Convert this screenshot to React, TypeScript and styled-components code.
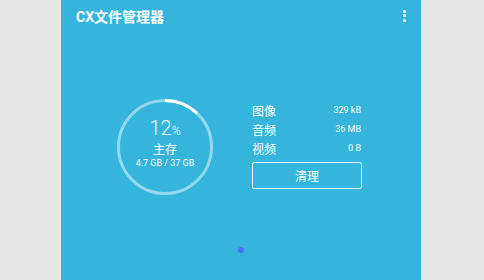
import React from "react";
import styled, { createGlobalStyle } from "styled-components";

const GlobalStyle = createGlobalStyle`
    body {
        margin: 0;
        background: #e6e6e6;
        font-family: Roboto, "Noto Sans CJK SC", sans-serif;
    }
`;

const Panel = styled.div`
    width: 360px;
    height: 280px;
    margin-left: 61px;
    background: #35b5dc;
    color: #fff;
    display: flex;
    flex-direction: column;
`;

const Header = styled.div`
    height: 31px;
    display: flex;
    align-items: center;
    justify-content: space-between;
    padding: 0 15px 0 15px;
`;

const Title = styled.div`
    font-size: 14px;
    font-weight: 700;
`;

const MenuDots = styled.div`
    display: flex;
    flex-direction: column;
    gap: 1.5px;
    & span {
        width: 3px;
        height: 3px;
        border-radius: 50%;
        background: #fff;
    }
`;

const Content = styled.div`
    display: flex;
    align-items: flex-start;
    justify-content: center;
    gap: 39px;
    margin-top: 68px;
    padding-right: 3px;
`;

const Gauge = styled.div`
    position: relative;
    width: 96px;
    height: 96px;
`;

const GaugeText = styled.div`
    position: absolute;
    inset: 0;
    display: flex;
    flex-direction: column;
    align-items: center;
    justify-content: center;
    padding-bottom: 8px;
`;

const Percent = styled.div`
    font-size: 20px;
    font-weight: 300;
    line-height: 22px;
    & small {
        font-size: 12px;
    }
`;

const Label = styled.div`
    font-size: 12px;
    line-height: 15px;
    margin-top: 1px;
`;

const Usage = styled.div`
    font-size: 9px;
    line-height: 11px;
`;

const Side = styled.div`
    width: 110px;
    display: flex;
    flex-direction: column;
    margin-top: 1.5px;
`;

const Row = styled.div`
    display: flex;
    justify-content: space-between;
    align-items: center;
    height: 19px;
`;

const RowName = styled.span`
    font-size: 12px;
`;

const RowValue = styled.span`
    font-size: 9px;
    padding-right: 1px;
`;

const CleanButton = styled.div`
    margin-top: 4.5px;
    height: 25px;
    border: 1px solid rgba(255, 255, 255, 0.85);
    border-radius: 2px;
    display: flex;
    align-items: center;
    justify-content: center;
    font-size: 12px;
`;

const Pager = styled.div`
    display: flex;
    justify-content: center;
    margin-top: 51.5px;
`;

const Dot = styled.span`
    width: 6px;
    height: 6px;
    border-radius: 50%;
    background: #4a72f0;
    margin-right: 1px;
`;

const rows = [
    { name: "图像", value: "329 kB" },
    { name: "音频", value: "36 MB" },
    { name: "视频", value: "0 B" },
];

function Ring({ percent }: { percent: number }) {
    const r = 46.5;
    const c = 2 * Math.PI * r;
    return (
        <svg width="96" height="96" viewBox="0 0 96 96">
            <circle cx="48" cy="48" r={r} fill="none" stroke="#93d8ee" strokeWidth="3" />
            <circle
                cx="48"
                cy="48"
                r={r}
                fill="none"
                stroke="#ffffff"
                strokeWidth="3"
                strokeDasharray={`${(c * percent) / 100} ${c}`}
                transform="rotate(-90 48 48)"
            />
        </svg>
    );
}

export default function App(): React.ReactElement {
    return (
        <>
            <GlobalStyle />
            <Panel>
                <Header>
                    <Title>CX文件管理器</Title>
                    <MenuDots>
                        <span />
                        <span />
                        <span />
                    </MenuDots>
                </Header>
                <Content>
                    <Gauge>
                        <Ring percent={12} />
                        <GaugeText>
                            <Percent>
                                12<small>%</small>
                            </Percent>
                            <Label>主存</Label>
                            <Usage>4.7 GB / 37 GB</Usage>
                        </GaugeText>
                    </Gauge>
                    <Side>
                        {rows.map((r) => (
                            <Row key={r.name}>
                                <RowName>{r.name}</RowName>
                                <RowValue>{r.value}</RowValue>
                            </Row>
                        ))}
                        <CleanButton>清理</CleanButton>
                    </Side>
                </Content>
                <Pager>
                    <Dot />
                </Pager>
            </Panel>
        </>
    );
}
